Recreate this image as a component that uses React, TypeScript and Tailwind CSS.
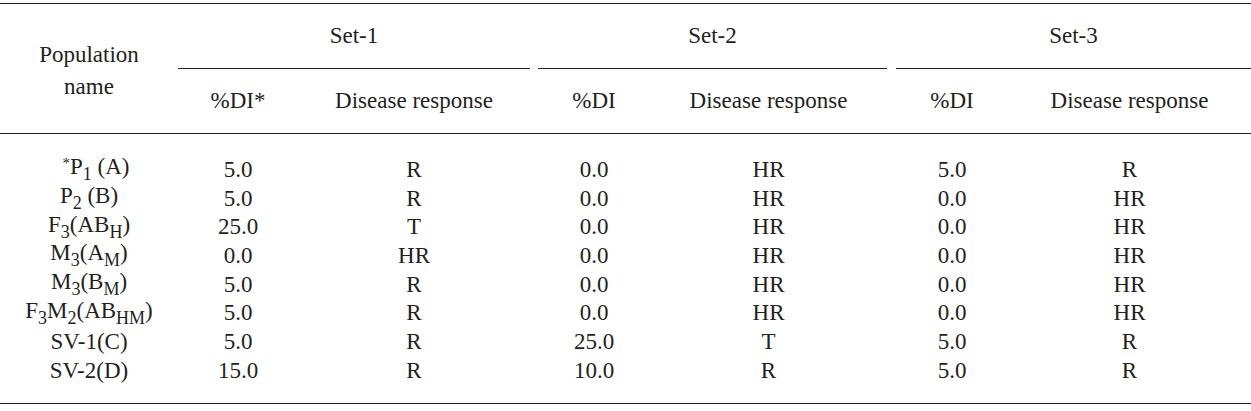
import React from "react";

type Row = {
  name: React.ReactNode;
  namePad?: string;
  v: [string, string, string, string, string, string];
};

const Sub = ({ children }: { children: React.ReactNode }) => (
  <span className="text-[18px] leading-none align-[-6px]">{children}</span>
);

const rows: Row[] = [
  {
    name: (
      <>
        <span className="text-[15px] leading-none align-[6px]">*</span>P<Sub>1</Sub> (A)
      </>
    ),
    namePad: "pl-[14px]",
    v: ["5.0", "R", "0.0", "HR", "5.0", "R"],
  },
  {
    name: (
      <>
        P<Sub>2</Sub> (B)
      </>
    ),
    v: ["5.0", "R", "0.0", "HR", "0.0", "HR"],
  },
  {
    name: (
      <>
        F<Sub>3</Sub>(AB<Sub>H</Sub>)
      </>
    ),
    v: ["25.0", "T", "0.0", "HR", "0.0", "HR"],
  },
  {
    name: (
      <>
        M<Sub>3</Sub>(A<Sub>M</Sub>)
      </>
    ),
    v: ["0.0", "HR", "0.0", "HR", "0.0", "HR"],
  },
  {
    name: (
      <>
        M<Sub>3</Sub>(B<Sub>M</Sub>)
      </>
    ),
    v: ["5.0", "R", "0.0", "HR", "0.0", "HR"],
  },
  {
    name: (
      <>
        F<Sub>3</Sub>M<Sub>2</Sub>(AB<Sub>HM</Sub>)
      </>
    ),
    v: ["5.0", "R", "0.0", "HR", "0.0", "HR"],
  },
  {
    name: <>SV-1(C)</>,
    v: ["5.0", "R", "25.0", "T", "5.0", "R"],
  },
  {
    name: <>SV-2(D)</>,
    v: ["15.0", "R", "10.0", "R", "5.0", "R"],
  },
];

const Group = ({
  width,
  gap,
  label,
  aWidth,
  aLabel,
}: {
  width: string;
  gap: string;
  label: string;
  aWidth: string;
  aLabel: string;
}) => (
  <div className={`flex flex-col ${width} ${gap}`}>
    <div className="h-[64px] flex items-center justify-center pt-[1px]">{label}</div>
    <div className="border-t border-[#231f20]" />
    <div className="flex-1 flex items-center pt-[1px]">
      <div className={`${aWidth} text-center`}>{aLabel}</div>
      <div className="flex-1 text-center">Disease response</div>
    </div>
  </div>
);

export default function App() {
  return (
    <div
      className="w-[1251px] h-[411px] bg-white text-[#231f20] text-[23px] pt-[3px]"
      style={{ fontFamily: '"Liberation Serif", "Times New Roman", serif' }}
    >
      <div className="border-t border-[#231f20] h-[130px] flex">
        <div className="w-[178px] flex flex-col items-center justify-center leading-[32px] pt-[4px]">
          <div>Population</div>
          <div>name</div>
        </div>
        <Group width="w-[352px]" gap="" label="Set-1" aWidth="w-[120px]" aLabel="%DI*" />
        <Group width="w-[349px]" gap="ml-[8px]" label="Set-2" aWidth="w-[112px]" aLabel="%DI" />
        <Group width="w-[355px]" gap="ml-[9px]" label="Set-3" aWidth="w-[112px]" aLabel="%DI" />
      </div>
      <div className="border-t border-b border-[#231f20] pt-[21px] pb-[18px]">
        {rows.map((r, i) => (
          <div key={i} className="flex h-[28.7px] items-center leading-none">
            <div className={`w-[178px] text-center whitespace-nowrap ${r.namePad ?? ""}`}>{r.name}</div>
            <div className="w-[120px] text-center">{r.v[0]}</div>
            <div className="w-[232px] text-center">{r.v[1]}</div>
            <div className="w-[8px]" />
            <div className="w-[112px] text-center">{r.v[2]}</div>
            <div className="w-[237px] text-center">{r.v[3]}</div>
            <div className="w-[9px]" />
            <div className="w-[112px] text-center">{r.v[4]}</div>
            <div className="w-[243px] text-center">{r.v[5]}</div>
          </div>
        ))}
      </div>
    </div>
  );
}
